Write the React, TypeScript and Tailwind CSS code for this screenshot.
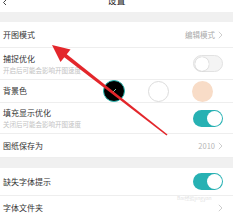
const Toggle = ({ on }: { on: boolean }) => {
  return on ? (
    <div className="flex h-[17px] w-[30px] items-center justify-end rounded-full bg-[#27b1b3] pr-[1px]">
      <div className="h-[15px] w-[15px] rounded-full bg-white" />
    </div>
  ) : (
    <div className="flex h-[17px] w-[30px] items-center rounded-full border border-[#e2e2e2] bg-[#f4f4f4] pl-[1px]">
      <div className="h-[14px] w-[14px] rounded-full bg-white shadow-[0_0_1px_rgba(0,0,0,0.35)]" />
    </div>
  );
};

const Chevron = () => (
  <svg width="5" height="8" viewBox="0 0 5 8" className="ml-[3px]">
    <polyline points="0.8,0.8 4,4 0.8,7.2" fill="none" stroke="#c8c8c8" strokeWidth="0.9" />
  </svg>
);

const Row = ({
  title,
  sub,
  h,
  children,
}: {
  title: string;
  sub?: string;
  h: string;
  children?: React.ReactNode;
}) => (
  <div className={`flex items-center justify-between border-b border-[#eeeeee] pl-[3px] pr-[10px] ${h}`}>
    <div className="flex flex-col">
      <span className="text-[8px] leading-[10px] text-[#333]">{title}</span>
      {sub && <span className="mt-[2px] text-[6.5px] leading-[8px] text-[#c2c2c2]">{sub}</span>}
    </div>
    {children}
  </div>
);

export default function App() {
  return (
    <div
      className="relative h-[216px] w-[233px] overflow-hidden bg-white"
      style={{ fontFamily: '"Noto Sans CJK SC", "Noto Sans", sans-serif' }}
    >
      <div className="relative flex h-[12px] justify-center">
        <span className="-mt-[4px] text-[9px] leading-[10px] text-[#222]">设置</span>
        <svg width="6" height="6" viewBox="0 0 6 6" className="absolute left-[2px] top-0">
          <polyline points="5,-1 1.5,2.5 4,5" fill="none" stroke="#444" strokeWidth="1" />
        </svg>
      </div>
      <div className="h-[10px] bg-[#f0f0f0]" />

      <Row title="开图模式" h="h-[26px]">
        <div className="flex items-center text-[7.5px] text-[#aaa]">
          编辑模式
          <Chevron />
        </div>
      </Row>
      <Row title="捕捉优化" sub="开启后可能会影响开图速度" h="h-[32px]">
        <Toggle on={false} />
      </Row>
      <Row title="背景色" h="h-[23px]">
        <div className="-mr-[10px] flex items-center gap-[23px] pr-[20px]">
          <div className="flex h-[22px] w-[22px] items-center justify-center rounded-full border border-[#2ab6b0] bg-black">
            <svg width="8" height="8" viewBox="0 0 8 8">
              <line x1="2" y1="6" x2="6" y2="2" stroke="#8fd8b8" strokeWidth="0.9" />
            </svg>
          </div>
          <div className="h-[21px] w-[21px] rounded-full border border-[#dcdcdc] bg-white" />
          <div className="h-[21px] w-[21px] rounded-full bg-[#f8dcc7]" />
        </div>
      </Row>
      <Row title="填充显示优化" sub="关闭后可能会影响开图速度" h="h-[31px]">
        <Toggle on={true} />
      </Row>
      <Row title="图纸保存为" h="h-[24px]">
        <div className="flex items-center text-[7.5px] text-[#b5b5b5]">
          2010
          <Chevron />
        </div>
      </Row>
      <div className="h-[10px] bg-[#f0f0f0]" />
      <Row title="缺失字体提示" h="h-[28px]">
        <Toggle on={true} />
      </Row>
      <Row title="字体文件夹" h="h-[24px]">
        <Chevron />
      </Row>

      <span className="absolute left-[177px] top-[195px] text-[5px] leading-[6px] text-[#e2e2e2]">
        Bai经验jingyan
      </span>

      <svg width="233" height="216" viewBox="0 0 233 216" className="pointer-events-none absolute left-0 top-0">
        <polygon points="52,45 60.5,62 65,56.5 70.5,49.5" fill="#e3262b" />
        <polygon points="62,55.5 64.5,52.5 167.5,134.5 166.5,135.5" fill="#e3262b" />
      </svg>
    </div>
  );
}
